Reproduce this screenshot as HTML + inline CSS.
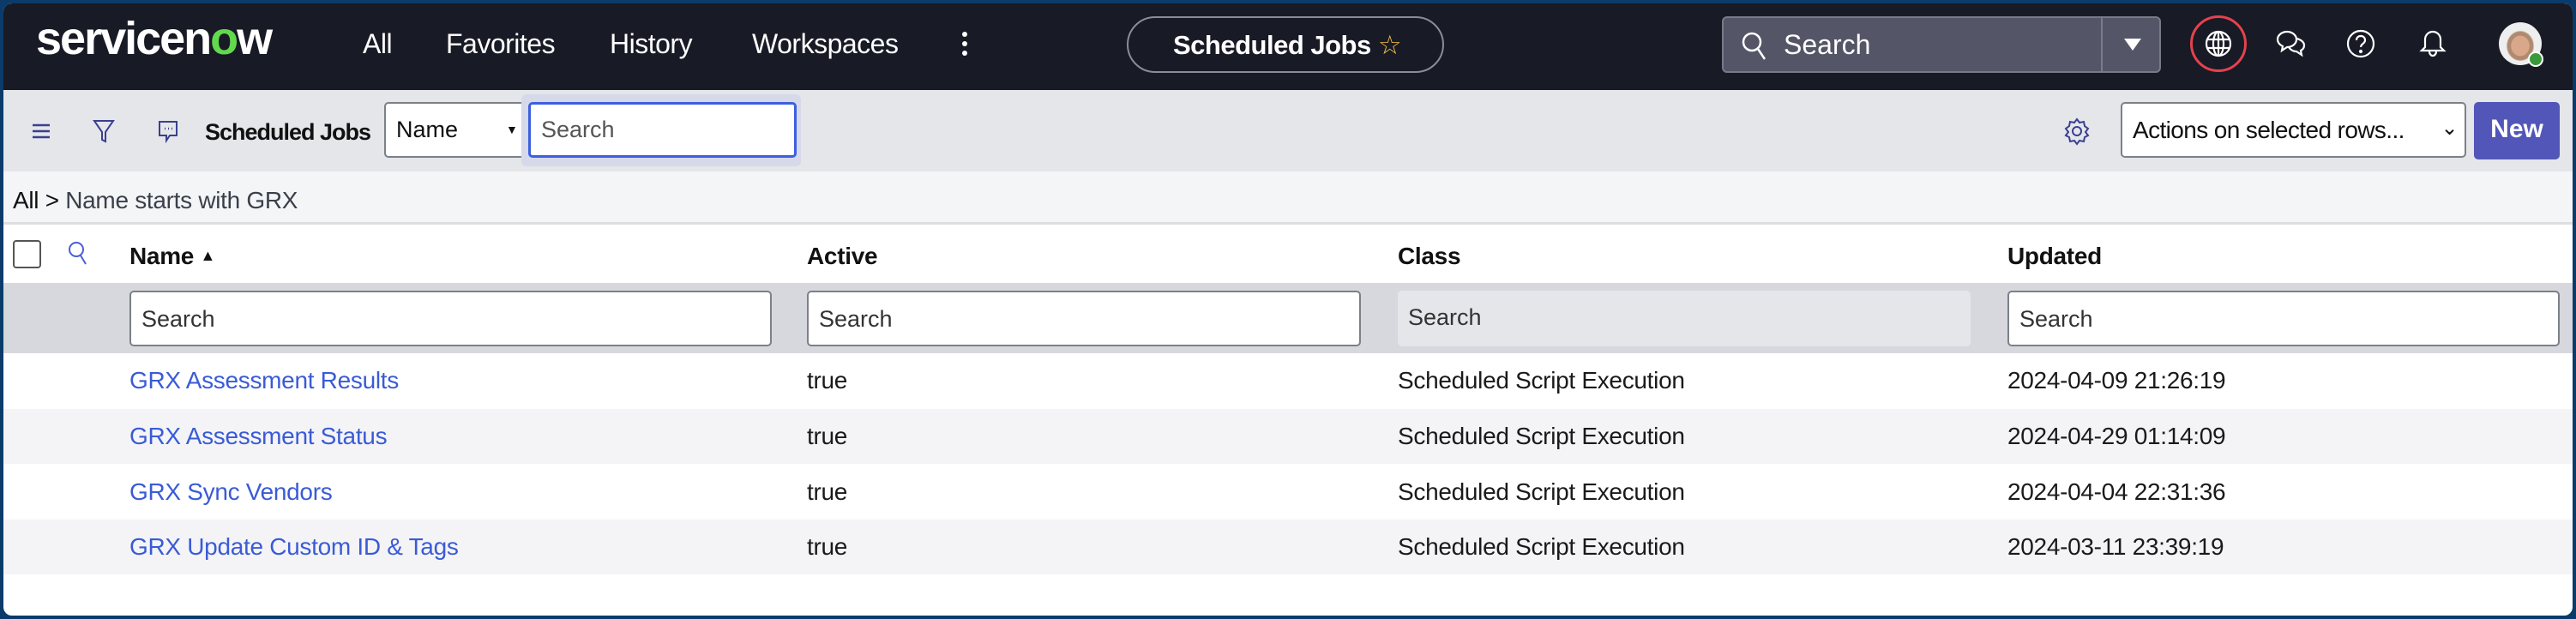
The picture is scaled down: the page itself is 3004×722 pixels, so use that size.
<!DOCTYPE html>
<html><head><meta charset="utf-8"><style>
*{box-sizing:border-box;margin:0;padding:0}
body{width:3004px;height:722px;overflow:hidden;background:#0b3b6a;font-family:"Liberation Sans",sans-serif}
#f{position:absolute;left:0;top:0;width:3004px;height:722px;border:4px solid #0b3b6a;border-radius:14px;overflow:hidden;background:#fff}
#w{position:absolute;left:-4px;top:-4px;width:3004px;height:722px}
.a{position:absolute}
.nav{left:0;top:0;width:3004px;height:105px;background:#181a25}
.nv{color:#fff;font-size:32px;top:33px;letter-spacing:-0.5px}
.tb{left:0;top:105px;width:3004px;height:95px;background:#e4e6ea}
.bc{left:0;top:200px;width:3004px;height:62px;background:#f4f5f7;border-bottom:3px solid #dcdee2}
.inp{background:#fff;border:2px solid #7c8088;border-radius:5px;height:65px;font-size:27px;color:#333;padding:16px 12px}
.th{font-size:28px;font-weight:bold;color:#111;top:283px;letter-spacing:-0.3px}
.row{left:0;width:3004px;height:64px;font-size:28px;color:#1a1a1a;letter-spacing:-0.3px}
.row span{position:absolute;top:16px}
.lk{color:#3a5bd6}
</style></head><body><div id="f"><div id="w">
<div class="a nav"></div>
<div class="a" style="left:42px;top:14px;color:#fff;font-size:54px;font-weight:bold;letter-spacing:-2px">servicen<span style="color:#62d84e">o</span>w</div>
<div class="a nv" style="left:423px">All</div>
<div class="a nv" style="left:520px">Favorites</div>
<div class="a nv" style="left:711px">History</div>
<div class="a nv" style="left:877px">Workspaces</div>
<div class="a" style="left:1122px;top:37px;width:6px"><div style="width:6px;height:6px;border-radius:3px;background:#fff;margin-bottom:5px"></div><div style="width:6px;height:6px;border-radius:3px;background:#fff;margin-bottom:5px"></div><div style="width:6px;height:6px;border-radius:3px;background:#fff"></div></div>
<div class="a" style="left:1314px;top:19px;width:370px;height:66px;border:2px solid #8a8d98;border-radius:33px;color:#fff;font-size:31px;font-weight:bold;padding:14px 0 0 52px;letter-spacing:-0.5px">Scheduled Jobs <span style="color:#f5c04a;font-weight:normal">☆</span></div>
<div class="a" style="left:2008px;top:19px;width:512px;height:66px;background:#545566;border:2px solid #777a88;border-radius:6px"></div>
<div class="a" style="left:2450px;top:19px;width:2px;height:66px;background:#7a7c8a"></div>
<svg class="a" style="left:2030px;top:36px" width="32" height="36" viewBox="0 0 32 36"><circle cx="13" cy="13" r="10" fill="none" stroke="#fff" stroke-width="2.5"/><path d="M20 21l8 12" stroke="#fff" stroke-width="2.5"/></svg>
<div class="a" style="left:2080px;top:34px;color:#fff;font-size:32px">Search</div>
<div class="a" style="left:2477px;top:45px;width:0;height:0;border-left:10px solid transparent;border-right:10px solid transparent;border-top:14px solid #fff"></div>
<div class="a" style="left:2554px;top:18px;width:66px;height:66px;border:3px solid #e4424d;border-radius:50%"></div>
<svg class="a" style="left:2570px;top:34px" width="34" height="34" viewBox="0 0 34 34" fill="none" stroke="#fff" stroke-width="2.2"><circle cx="17" cy="17" r="14"/><ellipse cx="17" cy="17" rx="6" ry="14"/><path d="M3 12h28M3 22h28M17 3v28"/></svg>
<svg class="a" style="left:2654px;top:34px" width="36" height="34" viewBox="0 0 36 34" fill="none" stroke="#fff" stroke-width="2.2"><path d="M13 3c6 0 11 4 11 9s-5 9-11 9l-6 4 1-5C4 18 2 15 2 12 2 7 7 3 13 3z"/><path d="M24 11c5 1 9 4 9 8 0 3-2 5-4 6l1 5-6-4c-4 0-7-2-9-5"/></svg>
<svg class="a" style="left:2736px;top:34px" width="34" height="34" viewBox="0 0 34 34" fill="none" stroke="#fff" stroke-width="2.2"><circle cx="17" cy="17" r="15"/><path d="M12 13c0-3 2-5 5-5s5 2 5 5c0 4-5 4-5 8"/><circle cx="17" cy="26" r="1" fill="#fff"/></svg>
<svg class="a" style="left:2821px;top:34px" width="32" height="34" viewBox="0 0 32 34" fill="none" stroke="#fff" stroke-width="2.2"><path d="M16 3c-5 0-9 4-9 9v9l-4 4h26l-4-4v-9c0-5-4-9-9-9z"/><path d="M12 26c0 3 2 5 4 5s4-2 4-5"/></svg>
<div class="a" style="left:2914px;top:26px;width:50px;height:50px;border-radius:50%;background:radial-gradient(ellipse at 50% 55%,#d9a88a 0 30%,#b08a70 31% 42%,#eeeeee 46%)"></div>
<div class="a" style="left:2948px;top:60px;width:18px;height:18px;border-radius:50%;background:#3a9a3a;border:2px solid #fff"></div>

<div class="a tb"></div>
<svg class="a" style="left:36px;top:143px" width="24" height="20"><path d="M2 3h20M2 10h20M2 17h20" stroke="#3b3f8f" stroke-width="2.5"/></svg>
<svg class="a" style="left:108px;top:138px" width="26" height="30" fill="none" stroke="#3b3f8f" stroke-width="2"><path d="M2 3h22L15 16v11l-4-2V16z"/></svg>
<svg class="a" style="left:183px;top:139px" width="26" height="30" fill="none" stroke="#3b3f8f" stroke-width="2"><path d="M3 3h20v16H15l-4 6v-6H3z"/><path d="M9 11h1M13 11h1M17 11h1" stroke-width="2.5"/></svg>
<div class="a" style="left:239px;top:139px;font-size:27px;font-weight:bold;color:#111;letter-spacing:-1px">Scheduled Jobs</div>
<div class="a inp" style="left:448px;top:119px;width:170px;color:#111;border-radius:5px 0 0 5px;padding-top:15px">Name<span style="position:absolute;left:140px;top:22px;font-size:14px">▼</span></div>
<div class="a" style="left:608px;top:110px;width:326px;height:84px;background:#d5d9ea;border-radius:6px"></div>
<div class="a inp" style="left:616px;top:119px;width:313px;border:3px solid #3d5fe0;color:#555;padding-top:14px">Search</div>
<svg class="a" style="left:2406px;top:136px" width="32" height="34" fill="none" stroke="#3b3f8f" stroke-width="2"><circle cx="16" cy="17" r="5"/><path d="M16 3l3 4 5-1 1 5 4 3-3 4 3 4-4 2-1 5-5-1-3 4-3-4-5 1-1-5-4-2 3-4-3-4 4-3 1-5 5 1z"/></svg>
<div class="a inp" style="left:2473px;top:119px;width:403px;color:#111;padding-top:15px;font-size:28px;letter-spacing:-0.6px">Actions on selected rows...<span style="position:absolute;right:8px;top:14px;font-size:24px">⌄</span></div>
<div class="a" style="left:2885px;top:119px;width:100px;height:67px;background:#5156b8;border-radius:5px;color:#fff;font-size:30px;font-weight:bold;text-align:center;padding-top:15px">New</div>

<div class="a bc"></div>
<div class="a" style="left:15px;top:218px;font-size:28px;color:#111;letter-spacing:-0.3px">All &gt; <span style="color:#3a3f4a">Name starts with GRX</span></div>

<div class="a" style="left:15px;top:280px;width:33px;height:33px;border:2px solid #555;border-radius:4px;background:#fff"></div>
<svg class="a" style="left:78px;top:280px" width="28" height="32" fill="none" stroke="#4a5fd0" stroke-width="2"><circle cx="11" cy="11" r="8"/><path d="M16 18l6 10"/></svg>
<div class="a th" style="left:151px">Name <span style="font-size:18px;position:relative;top:-4px">▲</span></div>
<div class="a th" style="left:941px">Active</div>
<div class="a th" style="left:1630px">Class</div>
<div class="a th" style="left:2341px">Updated</div>
<div class="a" style="left:0;top:330px;width:3004px;height:82px;background:#d6d8dd"></div>
<div class="a inp" style="left:151px;top:339px;width:749px">Search</div>
<div class="a inp" style="left:941px;top:339px;width:646px">Search</div>
<div class="a inp" style="left:1630px;top:339px;width:668px;background:#e4e6ea;border:none">Search</div>
<div class="a inp" style="left:2341px;top:339px;width:644px">Search</div>

<div class="a row" style="top:412px;background:#fff"><span class="lk" style="left:151px">GRX Assessment Results</span><span style="left:941px">true</span><span style="left:1630px">Scheduled Script Execution</span><span style="left:2341px">2024-04-09 21:26:19</span></div>
<div class="a row" style="top:477px;background:#f4f4f6"><span class="lk" style="left:151px">GRX Assessment Status</span><span style="left:941px">true</span><span style="left:1630px">Scheduled Script Execution</span><span style="left:2341px">2024-04-29 01:14:09</span></div>
<div class="a row" style="top:542px;background:#fff"><span class="lk" style="left:151px">GRX Sync Vendors</span><span style="left:941px">true</span><span style="left:1630px">Scheduled Script Execution</span><span style="left:2341px">2024-04-04 22:31:36</span></div>
<div class="a row" style="top:606px;background:#f4f4f6"><span class="lk" style="left:151px">GRX Update Custom ID &amp; Tags</span><span style="left:941px">true</span><span style="left:1630px">Scheduled Script Execution</span><span style="left:2341px">2024-03-11 23:39:19</span></div>
</div></div></body></html>
